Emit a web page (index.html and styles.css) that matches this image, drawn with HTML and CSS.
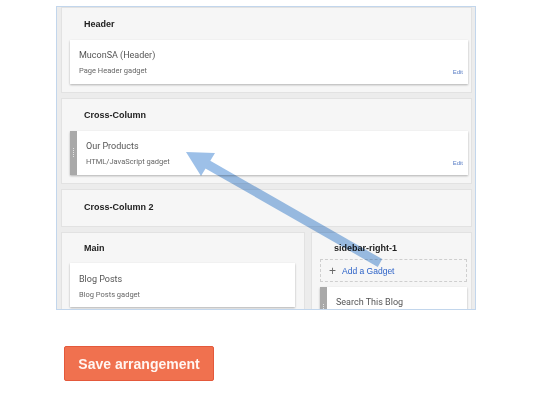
FILE: index.html
```html
<!DOCTYPE html>
<html>

<head lang="en">
    <meta charset="UTF-8">
    <meta name="viewport" content="width=device-width, initial-scale=1.0">
    <title>Layout</title>
    <link rel="stylesheet" href="styles.css">
</head>

<body>
    <div class="page">
        <div class="frame">
            <!-- Header -->
            <section class="region">
                <h2 class="region-title">Header</h2>
                <div class="gadget">
                    <div class="gadget-body">
                        <div class="gadget-name">MuconSA (Header)</div>
                        <div class="gadget-type">Page Header gadget</div>
                    </div>
                    <a class="gadget-edit" href="#">Edit</a>
                </div>
            </section>

            <!-- Cross-Column -->
            <section class="region">
                <h2 class="region-title">Cross-Column</h2>
                <div class="gadget">
                    <span class="grip"></span>
                    <div class="gadget-body">
                        <div class="gadget-name">Our Products</div>
                        <div class="gadget-type">HTML/JavaScript gadget</div>
                    </div>
                    <a class="gadget-edit" href="#">Edit</a>
                </div>
            </section>

            <section class="region region-empty">
                <h2 class="region-title">Cross-Column 2</h2>
            </section>

            <div class="columns">
                <section class="region region-main">
                    <h2 class="region-title">Main</h2>
                    <div class="gadget">
                        <div class="gadget-body">
                            <div class="gadget-name">Blog Posts</div>
                            <div class="gadget-type">Blog Posts gadget</div>
                        </div>
                    </div>
                </section>
                <section class="region region-side">
                    <h2 class="region-title">sidebar-right-1</h2>
                    <a class="add-gadget" href="#"><span class="plus">+</span>Add a Gadget</a>
                    <div class="gadget">
                        <span class="grip"></span>
                        <div class="gadget-body">
                            <div class="gadget-name">Search This Blog</div>
                        </div>
                    </div>
                </section>
            </div>
        </div>

        <!-- drag hint arrow drawn over the layout -->
        <svg class="arrow" width="540" height="394" viewBox="0 0 540 394">
            <line x1="380" y1="263" x2="205" y2="163" stroke="#9dc0e8" stroke-width="9"/>
            <polygon points="186,152 215,153 201,176" fill="#9dc0e8"/>
        </svg>

        <button class="save">Save arrangement</button>
    </div>
</body>

</html>
```

FILE: styles.css
```css
* {
    margin: 0;
    padding: 0;
    box-sizing: border-box;
}

body {
    background-color: #fff;
    font-family: "Liberation Sans", Arial, sans-serif;
}

.page {
    position: relative;
    width: 540px;
    height: 394px;
    padding: 6px 0 0 56px;
}

.frame {
    width: 420px;
    height: 304px;
    border: 1px solid #c2d6ec;
    background: #ececec;
    padding: 0 3px 0 4px;
    overflow: hidden;
}

.region {
    background: #f6f6f6;
    border: 1px solid #e2e2e2;
    padding: 9px 3px 8px 8px;
    margin-bottom: 5px;
}

.region-title {
    font-size: 9px;
    line-height: 14px;
    font-weight: bold;
    color: #222;
    padding-left: 14px;
    margin-bottom: 9px;
}

.region-empty {
    padding-top: 10px;
    padding-bottom: 12px;
}

.region-empty .region-title {
    margin-bottom: 0;
}

.gadget {
    display: flex;
    background: #fff;
    min-height: 44px;
    box-shadow: 0 1px 2px rgba(0, 0, 0, 0.28);
}

.gadget-body {
    flex: 1;
    padding: 8px 9px 6px;
    font-family: Roboto, "Liberation Sans", sans-serif;
}

.gadget-name {
    font-size: 9px;
    line-height: 14px;
    color: #555;
}

.gadget-type {
    font-size: 7.5px;
    line-height: 12px;
    margin-top: 3px;
    color: #666;
}

.gadget-edit {
    align-self: flex-end;
    font-size: 6px;
    color: #5b7fc6;
    text-decoration: none;
    padding: 0 5px 9px 0;
}

.grip {
    width: 7px;
    background: #a9a9a9;
    position: relative;
}

.grip::after {
    content: "";
    position: absolute;
    left: 3px;
    top: 50%;
    width: 1px;
    height: 10px;
    margin-top: -5px;
    background: repeating-linear-gradient(#e4e4e4 0 1px, transparent 1px 2px);
}

.columns {
    display: flex;
    gap: 6px;
}

.columns .region {
    padding-top: 8px;
}

.region-main {
    width: 244px;
    padding-right: 9px;
}

.region-main .region-title {
    margin-bottom: 8px;
}

.region-main .gadget-body {
    padding-top: 9px;
}

.region-side {
    flex: 1;
    padding-right: 4px;
}

.region-side .region-title {
    margin-bottom: 4px;
}

.add-gadget {
    display: flex;
    align-items: center;
    height: 23px;
    border: 1px dashed #cfcfcf;
    padding-left: 8px;
    font-size: 8.5px;
    color: #2d63c8;
    text-decoration: none;
    margin-bottom: 5px;
}

.plus {
    color: #666;
    font-size: 12px;
    font-weight: 300;
    margin-right: 6px;
}

.arrow {
    position: absolute;
    left: 0;
    top: 0;
    pointer-events: none;
    mix-blend-mode: multiply;
}

.save {
    display: block;
    margin-top: 36px;
    margin-left: 8px;
    width: 150px;
    height: 35px;
    background: #f0714f;
    border: 1px solid #e4593b;
    border-radius: 2px;
    color: #fff6f2;
    font-family: "Liberation Sans", Arial, sans-serif;
    font-size: 14px;
    font-weight: bold;
}
```
